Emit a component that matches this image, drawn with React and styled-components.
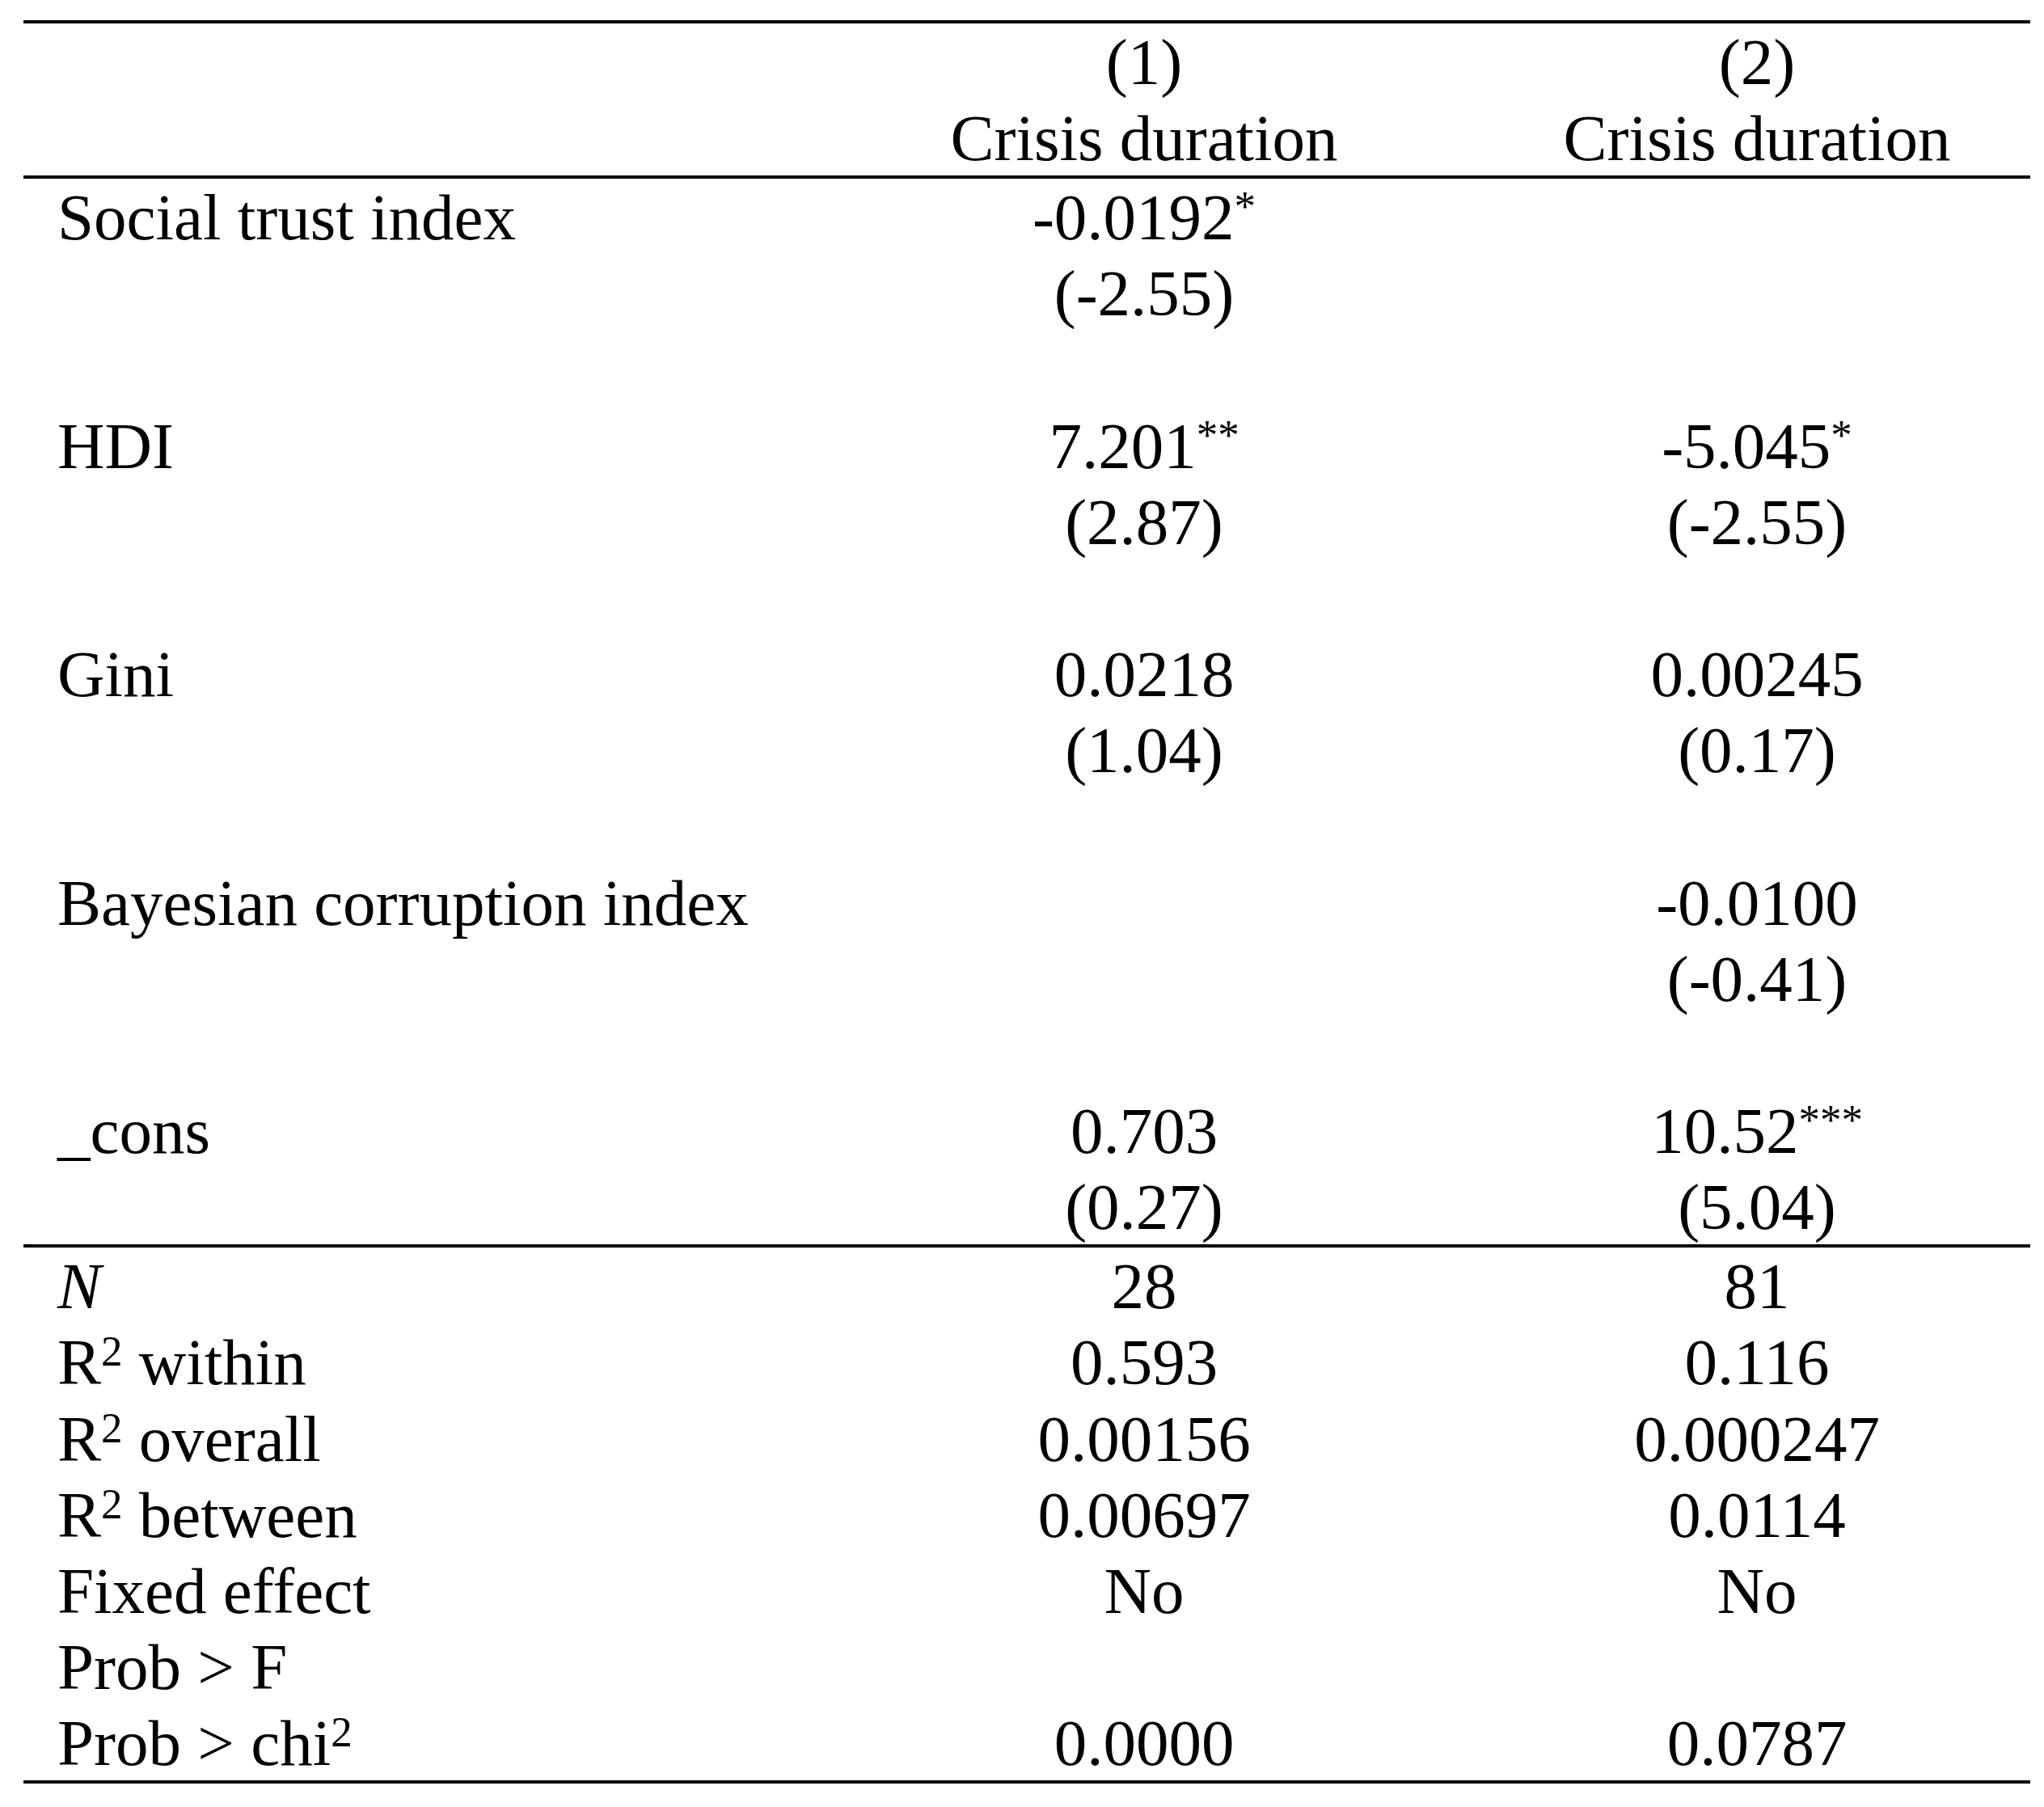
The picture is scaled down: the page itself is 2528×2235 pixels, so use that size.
import React from "react";
import styled, { createGlobalStyle } from "styled-components";

const GlobalStyle = createGlobalStyle`
  html, body {
    margin: 0;
    padding: 0;
    background: #ffffff;
  }
  body {
    font-family: "Liberation Serif", "Times New Roman", serif;
    color: #000000;
  }
`;

const columns = [
  { id: 1, title: "Crisis duration" },
  { id: 2, title: "Crisis duration" },
];

// Each coefficient row holds [estimate, stars, t-stat] per column
const coefficients = [
  {
    label: "Social trust index",
    values: [
      { est: "-0.0192", stars: "*", t: "(-2.55)" },
      null,
    ],
  },
  {
    label: "HDI",
    values: [
      { est: "7.201", stars: "**", t: "(2.87)" },
      { est: "-5.045", stars: "*", t: "(-2.55)" },
    ],
  },
  {
    label: "Gini",
    values: [
      { est: "0.0218", stars: "", t: "(1.04)" },
      { est: "0.00245", stars: "", t: "(0.17)" },
    ],
  },
  {
    label: "Bayesian corruption index",
    values: [null, { est: "-0.0100", stars: "", t: "(-0.41)" }],
  },
  {
    label: "_cons",
    values: [
      { est: "0.703", stars: "", t: "(0.27)" },
      { est: "10.52", stars: "***", t: "(5.04)" },
    ],
  },
];

const stats = [
  { label: <Italic>N</Italic>, values: ["28", "81"] },
  {
    label: (
      <>
        R<Sup>2</Sup> within
      </>
    ),
    values: ["0.593", "0.116"],
  },
  {
    label: (
      <>
        R<Sup>2</Sup> overall
      </>
    ),
    values: ["0.00156", "0.000247"],
  },
  {
    label: (
      <>
        R<Sup>2</Sup> between
      </>
    ),
    values: ["0.00697", "0.0114"],
  },
  { label: "Fixed effect", values: ["No", "No"] },
  { label: "Prob > F", values: ["", ""] },
  {
    label: (
      <>
        Prob &gt; chi<Sup>2</Sup>
      </>
    ),
    values: ["0.0000", "0.0787"],
  },
];

function Italic({ children }) {
  return <ItalicText>{children}</ItalicText>;
}

function Sup({ children }) {
  return <SupText>{children}</SupText>;
}

export default function App() {
  return (
    <>
      <GlobalStyle />
      <Page>
        <Table>
          <Section>
            <Row>
              <Label />
              {columns.map((c) => (
                <Cell key={c.id}>({c.id})</Cell>
              ))}
            </Row>
            <Row>
              <Label />
              {columns.map((c) => (
                <Cell key={c.id}>{c.title}</Cell>
              ))}
            </Row>
          </Section>

          <Section>
            {coefficients.map((coef, i) => (
              <React.Fragment key={coef.label}>
                <Row>
                  <Label>{coef.label}</Label>
                  {coef.values.map((v, j) => (
                    <Cell key={j}>
                      {v && (
                        <>
                          {v.est}
                          {v.stars && <SupText>{v.stars}</SupText>}
                        </>
                      )}
                    </Cell>
                  ))}
                </Row>
                <Row>
                  <Label />
                  {coef.values.map((v, j) => (
                    <Cell key={j}>{v && v.t}</Cell>
                  ))}
                </Row>
                {i < coefficients.length - 1 && <Row />}
              </React.Fragment>
            ))}
          </Section>

          <Section>
            {stats.map((s, i) => (
              <Row key={i}>
                <Label>{s.label}</Label>
                {s.values.map((v, j) => (
                  <Cell key={j}>{v}</Cell>
                ))}
              </Row>
            ))}
          </Section>
        </Table>
      </Page>
    </>
  );
}

const Page = styled.div`
  padding: 25px 0 0 29px;
  width: 2482px;
`;

const Table = styled.div`
  display: flex;
  flex-direction: column;
  border-top: 4px solid #000;
`;

const Section = styled.div`
  display: flex;
  flex-direction: column;
  border-bottom: 4px solid #000;
`;

const Row = styled.div`
  display: grid;
  grid-template-columns: 966px 840px 676px;
  height: 94.15px;
  box-sizing: border-box;
  padding-top: 3px;
  font-size: 81px;
  line-height: 91px;
  white-space: nowrap;
`;

const Cell = styled.div`
  text-align: center;
`;

const Label = styled.div`
  text-align: left;
  padding-left: 42px;
`;

const ItalicText = styled.span`
  font-style: italic;
`;

const SupText = styled.span`
  font-size: 53px;
  line-height: 0;
  vertical-align: 23px;
`;
